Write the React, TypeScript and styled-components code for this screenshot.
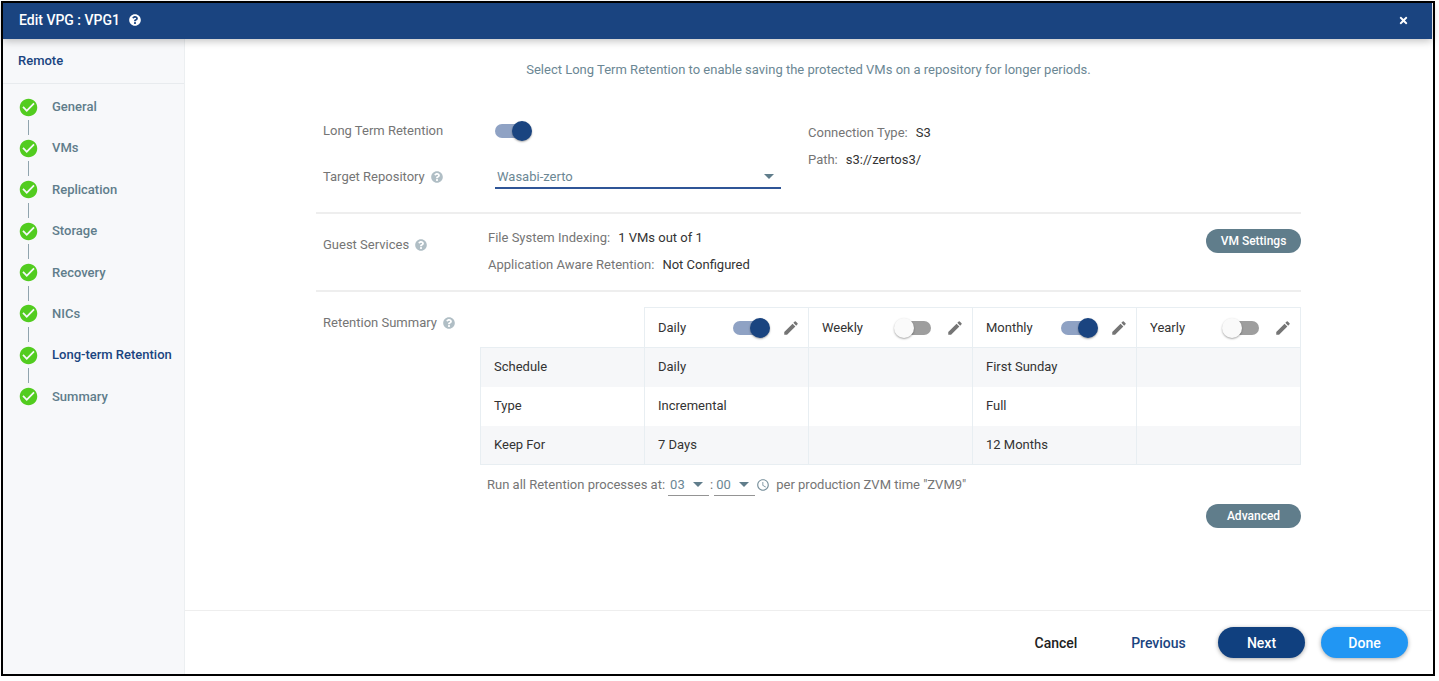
import React from "react";
import styled, { createGlobalStyle, css } from "styled-components";
import { FaQuestionCircle, FaTimes } from "react-icons/fa";
import { MdAccessTime, MdCheckCircle, MdEdit } from "react-icons/md";

const navy = "#1a4480";
const slate = "#607d8b";

const GlobalStyle = createGlobalStyle`
  *, *::before, *::after { box-sizing: border-box; }
  body {
    margin: 0;
    background: #fff;
    font-family: Roboto, "Liberation Sans", sans-serif;
    font-size: 13px;
    line-height: 18px;
    color: #424242;
  }
  button, select, input { font: inherit; margin: 0; }
`;

const Dialog = styled.div`
  display: flex;
  flex-direction: column;
  min-height: calc(100vh - 6px);
  margin: 1px 4px 5px 1px;
  padding-right: 1px;
  border: 2px solid #000;
  background: #fff;
`;

const TitleBar = styled.header`
  position: relative;
  display: flex;
  align-items: center;
  gap: 9px;
  height: 36px;
  padding: 0 23px 2px 16px;
  background: ${navy};
  color: #fff;
  box-shadow: 0 2px 8px rgba(0, 0, 0, 0.25);
`;

const Title = styled.h1`
  margin: 0;
  font-size: 14px;
  font-weight: 500;
`;

const IconButton = styled.button<{ $tone?: string; $push?: boolean }>`
  display: inline-flex;
  padding: 0;
  border: 0;
  background: none;
  color: ${(p) => p.$tone || "inherit"};
  cursor: pointer;
  ${(p) => p.$push && css`margin-left: auto;`}
`;

const Body = styled.div`
  display: flex;
  flex: 1;
`;

const Sidebar = styled.aside`
  flex: 0 0 182px;
  background: #f7f8fa;
  border-right: 1px solid #eceff1;
`;

const Site = styled.div`
  height: 45px;
  padding: 13px 15px;
  border-bottom: 1px solid #e8ebee;
  color: ${navy};
  font-weight: 500;
`;

const Steps = styled.ol`
  display: flex;
  flex-direction: column;
  height: 343px;
  margin: 0;
  padding: 12px 0 0 15px;
  list-style: none;
`;

const Step = styled.li`
  display: flex;
  flex: 1;
  flex-direction: column;
`;

const StepLink = styled.a<{ $current?: boolean }>`
  display: flex;
  align-items: center;
  gap: 13px;
  height: 22px;
  color: ${(p) => (p.$current ? navy : slate)};
  font-weight: 500;
  text-decoration: none;
  white-space: nowrap;
  svg { color: #52cc1f; }
`;

const StepLine = styled.span`
  width: 1px;
  height: 15px;
  margin: 2px 0 0 10px;
  background: #90a4ae;
`;

const Main = styled.main`
  display: flex;
  flex: 1;
  flex-direction: column;
  min-width: 0;
`;

const Content = styled.div`
  flex: 1;
  width: 100%;
  max-width: 985px;
  margin: 0 auto;
`;

const Intro = styled.p`
  margin: 0;
  padding: 22px 0 42px;
  text-align: center;
  color: #6b8794;
`;

const Section = styled.section<{ $pad: string; $columns: string }>`
  display: grid;
  grid-template-columns: ${(p) => p.$columns};
  padding: ${(p) => p.$pad};
  border-bottom: 2px solid #eeeeee;
  &:last-child { border-bottom: 0; }
`;

const Labels = styled.div<{ $top?: number }>`
  display: flex;
  flex-direction: column;
  gap: 26px;
  padding: ${(p) => p.$top || 0}px 0 0 7px;
`;

const LabelRow = styled.div`
  display: flex;
  align-items: center;
  gap: 6px;
  height: 20px;
  color: #757575;
`;

const Fields = styled.div`
  display: flex;
  flex-direction: column;
  gap: 22px;
`;

const ToggleInput = styled.input<{ $push?: boolean }>`
  appearance: none;
  position: relative;
  flex: none;
  width: 34px;
  height: 20px;
  ${(p) => p.$push && css`margin-left: auto;`}
  cursor: pointer;
  &::before {
    content: "";
    position: absolute;
    inset: 3px 0;
    border-radius: 7px;
    background: #9e9e9e;
  }
  &::after {
    content: "";
    position: absolute;
    top: 0;
    left: -3px;
    width: 20px;
    height: 20px;
    border-radius: 50%;
    background: #fafafa;
    box-shadow: 0 1px 2px rgba(0, 0, 0, 0.35);
  }
  &:checked::before { background: #8fa2c4; }
  &:checked::after { left: 17px; background: ${navy}; }
`;

const SelectBox = styled.div<{ $kind: "field" | "time" }>`
  position: relative;
  display: inline-flex;
  width: ${(p) => (p.$kind === "field" ? "286px" : "41px")};
  padding-top: ${(p) => (p.$kind === "field" ? "2px" : "0")};
  border-bottom: ${(p) => (p.$kind === "field" ? "2px solid #2f5597" : "1px solid #949494")};
`;

const Select = styled.select`
  appearance: none;
  width: 100%;
  height: 22px;
  padding: 1px 0 0 2px;
  border: 0;
  outline: 0;
  background: transparent;
  color: #6b8794;
`;

const Caret = styled.svg<{ $right: number }>`
  position: absolute;
  right: ${(p) => p.$right}px;
  bottom: 8px;
  width: 10px;
  height: 5px;
  fill: ${slate};
  pointer-events: none;
`;

const Facts = styled.dl<{ $offset: number }>`
  display: flex;
  flex-direction: column;
  gap: 9px;
  margin: ${(p) => p.$offset}px 0 0;
`;

const Fact = styled.div`
  display: flex;
  gap: 8px;
  dt { color: #757575; }
  dd { margin: 0; color: #333; }
`;

const PillButton = styled.button`
  width: 95px;
  height: 24px;
  padding: 0;
  border: 0;
  border-radius: 12px;
  background: ${slate};
  color: #fff;
  font-size: 12px;
  font-weight: 500;
  cursor: pointer;
`;

const Table = styled.table`
  width: 100%;
  table-layout: fixed;
  border-collapse: collapse;
  th, td {
    height: 39px;
    padding: 0 13px;
    border-left: 1px solid #e8eef2;
    border-right: 1px solid #e8eef2;
    text-align: left;
    font-weight: 400;
    color: #333;
  }
  thead th { height: 40px; border: 1px solid #e8eef2; padding-right: 8px; }
  thead td { border: 0; }
  tbody { border: 1px solid #e8eef2; }
  tbody tr:nth-child(odd) { background: #f6f7f9; }
`;

const HeadCell = styled.div`
  display: flex;
  align-items: center;
  gap: 15px;
`;

const RunRow = styled.div`
  display: flex;
  align-items: center;
  gap: 1px;
  padding: 8px 0 0 7px;
  color: #757575;
`;

const RunText = styled.span<{ $left?: number; $right?: number }>`
  margin: 0 ${(p) => p.$right || 0}px 0 ${(p) => p.$left || 0}px;
`;

const ActionRow = styled.div`
  display: flex;
  justify-content: flex-end;
  padding-top: 8px;
`;

const Footer = styled.footer`
  display: flex;
  align-items: center;
  justify-content: flex-end;
  gap: 16px;
  height: 64px;
  padding: 0 24px 0 0;
  border-top: 1px solid #eeeeee;
`;

const FooterButton = styled.button<{ $fill?: string; $color: string; $width: number }>`
  width: ${(p) => p.$width}px;
  height: 31px;
  padding: 0;
  border: 0;
  border-radius: 16px;
  background: ${(p) => p.$fill || "none"};
  color: ${(p) => p.$color};
  font-size: 14px;
  font-weight: 500;
  cursor: pointer;
  ${(p) => p.$fill && css`box-shadow: 0 1px 4px rgba(0, 0, 0, 0.35);`}
`;

const steps = ["General", "VMs", "Replication", "Storage", "Recovery", "NICs", "Long-term Retention", "Summary"];
const periods = [
  { name: "Daily", on: true },
  { name: "Weekly", on: false },
  { name: "Monthly", on: true },
  { name: "Yearly", on: false },
];
const rows = [
  ["Schedule", "Daily", "", "First Sunday", ""],
  ["Type", "Incremental", "", "Full", ""],
  ["Keep For", "7 Days", "", "12 Months", ""],
];

function Help({ topic }: { topic: string }) {
  return (
    <IconButton $tone="#b0bec5" aria-label={`Help: ${topic}`}>
      <FaQuestionCircle size={12} />
    </IconButton>
  );
}

function Dropdown({ id, label, kind, options }: { id: string; label?: string; kind: "field" | "time"; options: string[] }) {
  return (
    <SelectBox $kind={kind}>
      <Select id={id} aria-label={label}>
        {options.map((o) => (
          <option key={o}>{o}</option>
        ))}
      </Select>
      <Caret $right={kind === "field" ? 7 : 6} viewBox="0 0 10 5" aria-hidden="true">
        <path d="M0 0h10L5 5z" />
      </Caret>
    </SelectBox>
  );
}

export default function App() {
  return (
    <>
      <GlobalStyle />
      <Dialog>
        <TitleBar>
          <Title>Edit VPG : VPG1</Title>
          <IconButton aria-label="Help">
            <FaQuestionCircle size={12} />
          </IconButton>
          <IconButton $push aria-label="Close">
            <FaTimes size={11} />
          </IconButton>
        </TitleBar>
        <Body>
          <Sidebar>
            <Site>Remote</Site>
            <Steps>
              {steps.map((s, i) => (
                <Step key={s}>
                  <StepLink href="#" $current={s === "Long-term Retention"}>
                    <MdCheckCircle size={21} />
                    {s}
                  </StepLink>
                  {i < steps.length - 1 && <StepLine />}
                </Step>
              ))}
            </Steps>
          </Sidebar>
          <Main>
            <Content>
              <Intro>Select Long Term Retention to enable saving the protected VMs on a repository for longer periods.</Intro>
              <Section $pad="0 0 23px" $columns="179px 313px 1fr">
                <Labels>
                  <LabelRow>
                    <label htmlFor="ltr">Long Term Retention</label>
                  </LabelRow>
                  <LabelRow>
                    <label htmlFor="repo">Target Repository</label>
                    <Help topic="Target Repository" />
                  </LabelRow>
                </Labels>
                <Fields>
                  <ToggleInput id="ltr" type="checkbox" defaultChecked />
                  <Dropdown id="repo" kind="field" options={["Wasabi-zerto"]} />
                </Fields>
                <Facts $offset={3}>
                  <Fact><dt>Connection Type:</dt><dd>S3</dd></Fact>
                  <Fact><dt>Path:</dt><dd>s3://zertos3/</dd></Fact>
                </Facts>
              </Section>
              <Section $pad="15px 0 16px" $columns="172px 1fr auto">
                <Labels $top={6}>
                  <LabelRow>
                    Guest Services
                    <Help topic="Guest Services" />
                  </LabelRow>
                </Labels>
                <Facts $offset={0}>
                  <Fact><dt>File System Indexing:</dt><dd>1 VMs out of 1</dd></Fact>
                  <Fact><dt>Application Aware Retention:</dt><dd>Not Configured</dd></Fact>
                </Facts>
                <PillButton>VM Settings</PillButton>
              </Section>
              <Section $pad="15px 0" $columns="164px 1fr">
                <Labels $top={6}>
                  <LabelRow>
                    Retention Summary
                    <Help topic="Retention Summary" />
                  </LabelRow>
                </Labels>
                <div>
                  <Table>
                    <thead>
                      <tr>
                        <td />
                        {periods.map((p) => (
                          <th key={p.name} scope="col">
                            <HeadCell>
                              <label htmlFor={p.name}>{p.name}</label>
                              <ToggleInput $push id={p.name} type="checkbox" defaultChecked={p.on} />
                              <IconButton $tone="#757575" aria-label={`Edit ${p.name}`}>
                                <MdEdit size={18} />
                              </IconButton>
                            </HeadCell>
                          </th>
                        ))}
                      </tr>
                    </thead>
                    <tbody>
                      {rows.map(([head, ...cells]) => (
                        <tr key={head}>
                          <th scope="row">{head}</th>
                          {cells.map((c, i) => (
                            <td key={i}>{c}</td>
                          ))}
                        </tr>
                      ))}
                    </tbody>
                  </Table>
                  <RunRow>
                    <RunText $right={2}>Run all Retention processes at:</RunText>
                    <Dropdown id="hour" label="Hour" kind="time" options={["03"]} />
                    <RunText>:</RunText>
                    <Dropdown id="minute" label="Minute" kind="time" options={["00"]} />
                    <MdAccessTime size={14} color="#78909c" />
                    <RunText $left={5}>per production ZVM time "ZVM9"</RunText>
                  </RunRow>
                  <ActionRow>
                    <PillButton>Advanced</PillButton>
                  </ActionRow>
                </div>
              </Section>
            </Content>
            <Footer>
              <FooterButton $color="#212121" $width={86}>Cancel</FooterButton>
              <FooterButton $color={navy} $width={87}>Previous</FooterButton>
              <FooterButton $color="#fff" $fill="#10407f" $width={87}>Next</FooterButton>
              <FooterButton $color="#fff" $fill="#2196f3" $width={87}>Done</FooterButton>
            </Footer>
          </Main>
        </Body>
      </Dialog>
    </>
  );
}
